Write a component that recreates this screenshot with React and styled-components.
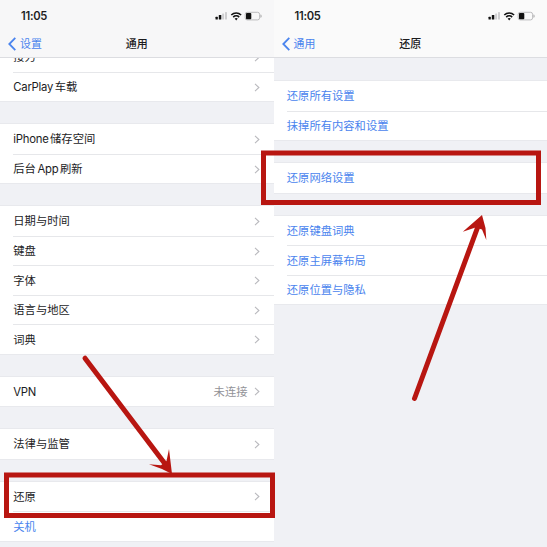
import React from 'react';
import styled, { createGlobalStyle } from 'styled-components';

const GlobalStyle = createGlobalStyle`
  *, *::before, *::after { box-sizing: border-box; }
  body { margin: 0; overflow: hidden; background: #f0f1f5; }
`;

const Stage = styled.main`
  position: relative;
  display: grid;
  grid-template-columns: 273.5px 273.5px;
  width: 547px;
  height: 547px;
  overflow: hidden;
  font-family: Inter, 'Noto Sans CJK SC', sans-serif;
  font-size: 11.3px;
  color: #1c1c1e;
`;

const Screen = styled.section`
  display: flex;
  flex-direction: column;
  height: 547px;
  min-width: 0;
  overflow: hidden;
  background: #f0f1f5;
`;

const Header = styled.header`
  flex: none;
  height: 58px;
  background: ${(p) => p.$tone};
  border-bottom: 1px solid #dcdde1;
`;

const StatusBar = styled.div`
  display: flex;
  align-items: center;
  justify-content: space-between;
  height: 32px;
  padding: 0 11px 0 21px;
`;

const Clock = styled.span`
  font-size: 11.2px;
  font-weight: 600;
  letter-spacing: -0.28px;
  line-height: 16px;
`;

const NavBar = styled.div`
  display: grid;
  grid-template-columns: 1fr auto 1fr;
  align-items: center;
  height: 23px;
  padding: 0 8px;
`;

const Back = styled.a`
  display: flex;
  align-items: center;
  gap: 4px;
  color: #4a84ee;
  font-size: 10.9px;
  line-height: 16px;
`;

const Title = styled.h1`
  margin: 0;
  font-size: 11px;
  font-weight: 500;
  line-height: 16px;
`;

const Content = styled.div`
  flex: 1;
  min-height: 0;
  overflow: hidden;
`;

const Groups = styled.div`
  display: flex;
  flex-direction: column;
  gap: 23px;
  margin-top: ${(p) => p.$offset}px;
`;

const Group = styled.div`
  background: #fff;
  box-shadow: 0 -0.5px 0 #e0e1e5, 0 0.5px 0 #e0e1e5;
`;

const Row = styled.div`
  display: flex;
  align-items: center;
  height: 29.5px;
  margin-left: 13.3px;
  padding-right: 14px;
  color: ${(p) => (p.$link ? '#4a84ee' : 'inherit')};
  white-space: nowrap;

  & + & { border-top: 1px solid #e6e7ea; }
`;

const Label = styled.span`
  flex: 1;
  display: flex;
  gap: 1.6px;
  padding-top: 1px;
  line-height: 17px;
`;

const Latin = styled.span`
  letter-spacing: -0.25px;
`;

const Value = styled.span`
  margin-right: 6px;
  padding-top: 1px;
  color: #929297;
  line-height: 17px;
`;

const Overlay = styled.svg`
  position: absolute;
  inset: 0;
  pointer-events: none;
`;

function Chevron() {
  return (
    <svg width="6" height="9" viewBox="0 0 6 9" fill="none">
      <path d="M1 0.8 4.9 4.5 1 8.2" stroke="#b9b9be" strokeWidth="1.1" />
    </svg>
  );
}

function StatusIcons() {
  return (
    <svg width="48" height="12" viewBox="0 0 48 12">
      <rect x="0.5" y="6.8" width="2.3" height="2.8" rx="0.5" fill="#111" />
      <rect x="3.8" y="5.1" width="2.5" height="4.5" rx="0.5" fill="#111" />
      <rect x="7.1" y="3.5" width="2" height="6.1" rx="0.5" fill="#cfcfd1" />
      <rect x="10" y="2" width="2" height="7.6" rx="0.5" fill="#cfcfd1" />
      <g fill="none" stroke="#111" strokeWidth="1.6">
        <path d="M16.3 5a7 7 0 0 1 9.8 0" />
        <path d="M18.2 7.1a4.3 4.3 0 0 1 6 0" />
      </g>
      <path d="m19.6 8.6 1.6 1.8 1.6-1.8a2.4 2.4 0 0 0-3.2 0Z" fill="#111" />
      <rect x="30.2" y="2.3" width="14.4" height="7.6" rx="2" fill="none" stroke="#b4b4b7" strokeWidth="0.9" />
      <rect x="31" y="3" width="5.3" height="6.2" rx="0.9" fill="#111" />
      <path d="M45.8 4.7q1.2 1.4 0 2.8Z" fill="#aaa" stroke="#aaa" strokeWidth="0.5" />
    </svg>
  );
}

function ScreenHeader({ back, title, tone }) {
  return (
    <Header $tone={tone}>
      <StatusBar>
        <Clock>11:05</Clock>
        <StatusIcons />
      </StatusBar>
      <NavBar>
        <Back>
          <svg width="8" height="14" viewBox="0 0 8 14" fill="none">
            <path d="M7.3 0.9 1.3 7l6 6.1" stroke="#4a84ee" strokeWidth="1.8" />
          </svg>
          {back}
        </Back>
        <Title>{title}</Title>
      </NavBar>
    </Header>
  );
}

const isLatin = (part) => /^[A-Za-z]+$/.test(part);

function SettingRow({ label, value, link, plain }) {
  return (
    <Row $link={link}>
      <Label>
        {label.split(' ').map((part) =>
          isLatin(part) ? <Latin key={part}>{part}</Latin> : <span key={part}>{part}</span>
        )}
      </Label>
      {value && <Value>{value}</Value>}
      {!plain && <Chevron />}
    </Row>
  );
}

function SettingGroups({ groups, offset }) {
  return (
    <Content>
      <Groups $offset={offset}>
        {groups.map((rows) => (
          <Group key={rows[0].label}>
            {rows.map((row) => (
              <SettingRow key={row.label} {...row} />
            ))}
          </Group>
        ))}
      </Groups>
    </Content>
  );
}

const general = [
  [{ label: '接力' }, { label: 'CarPlay 车载' }],
  [{ label: 'iPhone 储存空间' }, { label: '后台 App 刷新' }],
  [
    { label: '日期与时间' },
    { label: '键盘' },
    { label: '字体' },
    { label: '语言与地区' },
    { label: '词典' },
  ],
  [{ label: 'VPN', value: '未连接' }],
  [{ label: '法律与监管' }],
  [{ label: '还原' }, { label: '关机', link: true, plain: true }],
];

const action = (label) => ({ label, link: true, plain: true });

const reset = [
  [action('还原所有设置'), action('抹掉所有内容和设置')],
  [action('还原网络设置')],
  [action('还原键盘词典'), action('还原主屏幕布局'), action('还原位置与隐私')],
];

export default function App() {
  return (
    <>
      <GlobalStyle />
      <Stage>
        <Screen>
          <ScreenHeader back="设置" title="通用" tone="#f7f7f8" />
          <SettingGroups groups={general} offset={-15.6} />
        </Screen>
        <Screen>
          <ScreenHeader back="通用" title="还原" tone="#fafafa" />
          <SettingGroups groups={reset} offset={23.3} />
        </Screen>
        <Overlay width="547" height="547" viewBox="0 0 547 547">
          <g fill="none" stroke="#b81611" strokeWidth="5">
            <rect x="6.5" y="475" width="266" height="40.5" />
            <rect x="263.5" y="153" width="275" height="49.5" />
            <path d="M85 358.2 165.5 464.5" strokeLinecap="round" />
            <path d="M414.5 398.5 478.5 225" strokeLinecap="round" />
          </g>
          <g fill="#b81611">
            <path d="M172 474 169 449 166.5 461 161 465.3 149 464.3 162 469Z" />
            <path d="M482 215 462.8 231.8 475.5 227.5 482 229.5 486.3 240 485.5 228Z" />
          </g>
        </Overlay>
      </Stage>
    </>
  );
}
